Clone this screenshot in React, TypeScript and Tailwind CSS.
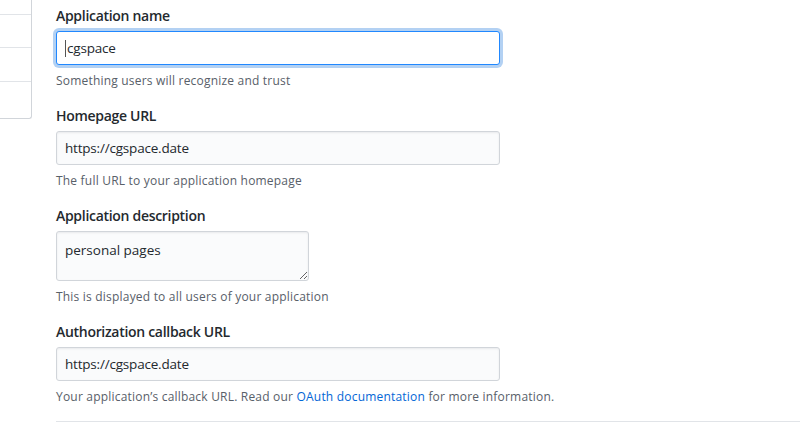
const font = { fontFamily: '"Open Sans", "Liberation Sans", sans-serif' };

function Field({
  label,
  children,
  note,
}: {
  label: string;
  children: React.ReactNode;
  note: React.ReactNode;
}) {
  return (
    <div className="mb-[15px]">
      <div className="h-[21px] text-[14px] leading-[21px] font-semibold tracking-[-0.3px] text-[#24292e]">
        {label}
      </div>
      <div className="mt-[5px]">{children}</div>
      <div className="mt-[7px] h-[18px] text-[12px] leading-[18px] tracking-[0.2px] text-[#586069]">
        {note}
      </div>
    </div>
  );
}

function TextBox({ value, focused }: { value: string; focused?: boolean }) {
  return (
    <div
      className={
        focused
          ? "flex h-[34px] w-[444px] items-center rounded-[3px] border border-[#2188ff] bg-white px-2 pt-px text-[13.5px] tracking-[-0.2px] text-[#24292e] shadow-[0_0_0_3px_rgba(3,102,214,0.3)]"
          : "flex h-[34px] w-[444px] items-center rounded-[3px] border border-[#d1d5da] bg-[#fafbfc] px-2 pt-px text-[13.5px] tracking-[-0.2px] text-[#24292e] shadow-[inset_0_1px_2px_rgba(27,31,35,0.075)]"
      }
    >
      {focused && <span className="mr-px h-[17px] w-px bg-[#555]" />}
      <span>{value}</span>
    </div>
  );
}

export default function App() {
  return (
    <div className="flex h-[433px] w-[800px] overflow-hidden bg-white" style={font}>
      {/* settings menu, cut off at the left */}
      <div className="w-[32px] shrink-0">
        <div className="flex h-[119px] flex-col rounded-br-[3px] border-r border-b border-[#d1d5da] bg-white">
          <div className="h-[15px] border-b border-[#e1e4e8]" />
          <div className="h-[33px] border-b border-[#e1e4e8]" />
          <div className="h-[34px] border-b border-[#e1e4e8]" />
          <div className="flex-1" />
        </div>
      </div>

      <div className="ml-[24px] flex-1 pt-[5px]">
        <Field label="Application name" note="Something users will recognize and trust">
          <TextBox value="cgspace" focused />
        </Field>
        <Field label="Homepage URL" note="The full URL to your application homepage">
          <TextBox value="https://cgspace.date" />
        </Field>
        <Field
          label="Application description"
          note="This is displayed to all users of your application"
        >
          <textarea
            readOnly
            defaultValue="personal pages"
            className="block h-[50px] w-[253px] resize rounded-[3px] border border-[#d1d5da] bg-[#fafbfc] px-2 pt-[8px] pb-[4px] text-[13.5px] leading-[20px] text-[#24292e] shadow-[inset_0_1px_2px_rgba(27,31,35,0.075)] outline-none"
            style={font}
          />
        </Field>
        <Field
          label="Authorization callback URL"
          note={
            <>
              Your application’s callback URL. Read our{" "}
              <span className="text-[#0366d6]">OAuth documentation</span> for more
              information.
            </>
          }
        >
          <TextBox value="https://cgspace.date" />
        </Field>
        <div className="border-t border-[#e1e4e8]" />
      </div>
    </div>
  );
}
